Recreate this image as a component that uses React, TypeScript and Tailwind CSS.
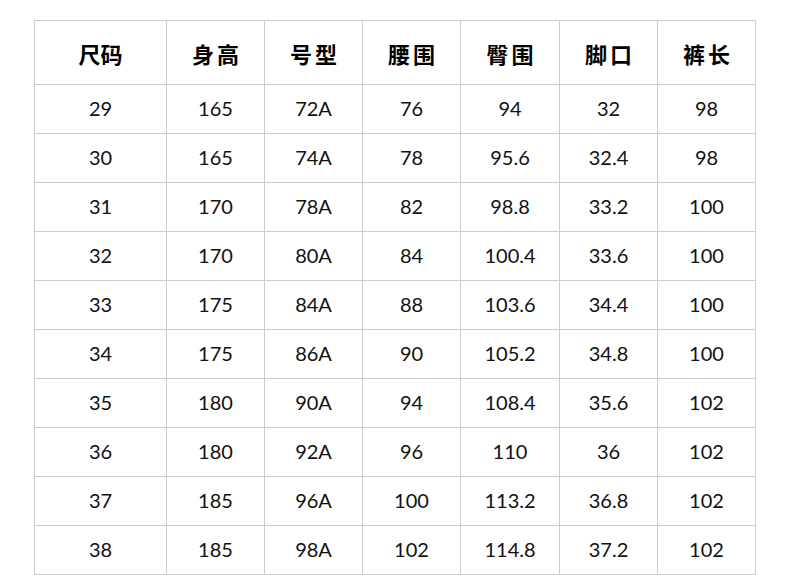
import React from "react";

const headers = ["尺码", "身高", "号型", "腰围", "臀围", "脚口", "裤长"];
const rows = [
  ["29", "165", "72A", "76", "94", "32", "98"],
  ["30", "165", "74A", "78", "95.6", "32.4", "98"],
  ["31", "170", "78A", "82", "98.8", "33.2", "100"],
  ["32", "170", "80A", "84", "100.4", "33.6", "100"],
  ["33", "175", "84A", "88", "103.6", "34.4", "100"],
  ["34", "175", "86A", "90", "105.2", "34.8", "100"],
  ["35", "180", "90A", "94", "108.4", "35.6", "102"],
  ["36", "180", "92A", "96", "110", "36", "102"],
  ["37", "185", "96A", "100", "113.2", "36.8", "102"],
  ["38", "185", "98A", "102", "114.8", "37.2", "102"],
];

export default function App() {
  return (
    <div className="w-[790px] h-[575px] bg-white pt-[20px] pl-[34px] overflow-hidden">
      <div
        className="grid grid-cols-[132px_98px_98px_98px_99px_98px_98px] w-fit border-t border-l border-[#cccccc] text-black"
        style={{ fontFamily: "Lato, 'Noto Sans CJK SC', sans-serif" }}
      >
        {headers.map((h, i) => (
          <div
            key={h}
            className={`h-[64px] flex items-center justify-center pt-[1px] border-r border-b border-[#cccccc] text-[22px] font-bold ${i === 0 ? "" : "tracking-[3px] pl-[3px]"}`}
            style={{ fontFamily: "'Noto Sans CJK SC', sans-serif" }}
          >
            {h}
          </div>
        ))}
        {rows.map((r, ri) =>
          r.map((c, ci) => (
            <div
              key={`${ri}-${ci}`}
              className="h-[49px] flex items-center justify-center pb-[2px] border-r border-b border-[#cccccc] text-[20px] font-normal text-[#111111]"
            >
              {c}
            </div>
          ))
        )}
      </div>
    </div>
  );
}
